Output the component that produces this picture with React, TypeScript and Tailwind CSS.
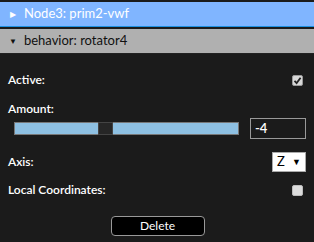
export default function App() {
  return (
    <div className="w-[314px] h-[242px] bg-[#1b1b1b] font-['Lato',sans-serif] text-[12px] text-white overflow-hidden">
      <div className="pt-[2px]">
        <div className="h-[25px] bg-[#80b5ff] border-b border-[#1e90e0] flex items-center pl-[10px] gap-[8px] text-white">
          <span className="text-[8px] leading-none">▶</span>
          <span className="text-[13px]">Node3: prim2-vwf</span>
        </div>
        <div className="h-[2px]" />
        <div className="h-[25px] bg-[#b0b0b0] border-b border-[#222] flex items-center pl-[9px] gap-[7px] text-[#111]">
          <span className="text-[8px] leading-none">▼</span>
          <span className="text-[13px]">behavior: rotator4</span>
        </div>
      </div>

      <div className="px-[8px] pt-[18px]">
        <div className="flex items-center justify-between h-[16px] pr-[3px]">
          <span className="font-semibold">Active:</span>
          <div className="w-[11px] h-[11px] bg-[#d8d8d8] rounded-[2px] border border-[#999] flex items-center justify-center">
            <svg width="9" height="9" viewBox="0 0 9 9">
              <path d="M1.5 4.8 L3.6 7 L7.6 1.8" stroke="#222" strokeWidth="1.8" fill="none" />
            </svg>
          </div>
        </div>

        <div className="mt-[13px] font-semibold h-[16px] flex items-center">Amount:</div>
        <div className="flex items-center mt-[1px]">
          <div className="ml-[6px] w-[225px] h-[13px] bg-[#8ec0e2] border border-[#777] relative">
            <div className="absolute left-[83px] top-[-1px] w-[15px] h-[13px] bg-[#262626] border border-[#444]" />
          </div>
          <div className="ml-[11px] w-[56px] h-[21px] border border-[#999] flex items-center pl-[4px] font-semibold text-[13px]">
            -4
          </div>
        </div>

        <div className="flex items-center justify-between mt-[13px] h-[20px]">
          <span className="font-semibold">Axis:</span>
          <div className="w-[34px] h-[20px] bg-white border border-[#aaa] text-black flex items-center justify-between px-[4px] text-[13px]">
            <span>Z</span>
            <span className="text-[9px]">▼</span>
          </div>
        </div>

        <div className="flex items-center justify-between mt-[10px] h-[16px] pr-[3px]">
          <span className="font-semibold">Local Coordinates:</span>
          <div className="w-[11px] h-[11px] bg-[#dcdcdc] rounded-[2px] border border-[#bbb]" />
        </div>

        <div className="flex justify-center mt-[18px] pl-[1px]">
          <button className="w-[94px] h-[20px] bg-black border border-[#999] rounded-[4px] text-white text-[12px] leading-none">
            Delete
          </button>
        </div>
      </div>
    </div>
  );
}
